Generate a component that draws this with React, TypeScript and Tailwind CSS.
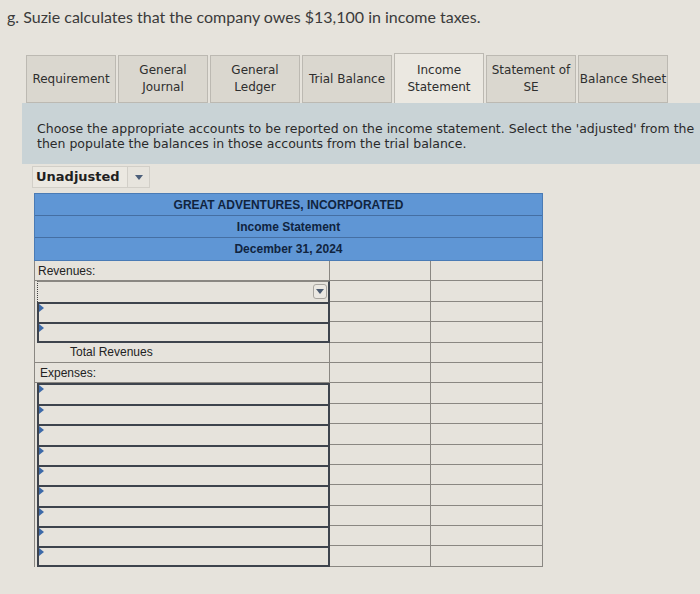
const tabs = [
  { label: ['Requirement'] },
  { label: ['General', 'Journal'] },
  { label: ['General', 'Ledger'] },
  { label: ['Trial Balance'] },
  { label: ['Income', 'Statement'], active: true },
  { label: ['Statement of', 'SE'] },
  { label: ['Balance Sheet'] },
]

function Flag() {
  return (
    <span className="absolute left-0 top-0 w-0 h-0 border-t-[4px] border-b-[4px] border-l-[5px] border-t-transparent border-b-transparent border-l-[#3d6aa8]" />
  )
}

function AmountCells() {
  return (
    <>
      <div className="w-[101px] border-r border-b border-[#8a8782]" />
      <div className="w-[112px] border-r border-b border-[#8a8782]" />
    </>
  )
}

function LabelRow({ text, indent }: { text: string; indent: string }) {
  return (
    <div className="flex h-[20.4px]">
      <div className={`w-[296px] border-l border-r border-b border-[#8a8782] flex items-center ${indent}`}>{text}</div>
      <AmountCells />
    </div>
  )
}

function InputRow({ last, select }: { last?: boolean; select?: boolean }) {
  return (
    <div className="flex h-[20.4px]">
      <div className="w-[296px] border-l border-[#8a8782] pl-[2px]">
        {select ? (
          <div className="relative h-full border-t border-t-[#8a8782] border-l border-l-[#444] [border-left-style:dotted] border-r-2 border-r-[#3e444d]">
            <span className="absolute right-[1px] top-[2px] w-[14px] h-[15px] border border-[#a9a6a0] bg-[#ebe8e2] rounded-[3px] flex items-center justify-center">
              <span className="w-0 h-0 border-l-[4px] border-r-[4px] border-t-[5px] border-l-transparent border-r-transparent border-t-[#4a5a70]" />
            </span>
          </div>
        ) : (
          <div className={`relative h-full border-l-2 border-t-2 border-r-2 border-[#3e444d] ${last ? 'border-b-2' : ''}`}>
            <Flag />
          </div>
        )}
      </div>
      <AmountCells />
    </div>
  )
}

export default function App() {
  return (
    <div className="w-[700px] h-[594px] overflow-hidden bg-[#e6e3dc] relative">
      <p className="pl-[7px] pt-[7px] text-[16px] leading-[20px] text-[#3b3b3b] font-['Lato',sans-serif] whitespace-nowrap">
        g. Suzie calculates that the company owes $13,100 in income taxes.
      </p>

      {/* Tabs */}
      <div className="ml-[26px] mt-[26px] flex items-end gap-[2px] font-['DejaVu_Sans',sans-serif] text-[12px] leading-[17px] text-[#2e2e2e]">
        {tabs.map((t, i) => (
          <div
            key={i}
            className={`w-[90px] flex flex-col items-center justify-center text-center border border-[#bcb9b2] ${
              t.active ? 'h-[50px] bg-[#ebe8e1] border-b-0' : 'h-[48px] bg-[#dad7cf]'
            }`}
          >
            {t.label.map((l) => (
              <span key={l}>{l}</span>
            ))}
          </div>
        ))}
      </div>

      {/* Instructions */}
      <div className="ml-[22px] bg-[#c9d3d6] pl-[15px] pt-[18px] pb-[13px] font-['DejaVu_Sans',sans-serif] text-[12.5px] leading-[15px] text-[#2a2a2a] whitespace-nowrap">
        <p>
          Choose the appropriate accounts to be reported on the income statement. Select the 'adjusted' from the
          <br />
          then populate the balances in those accounts from the trial balance.
        </p>
      </div>

      {/* Dropdown */}
      <div className="ml-[32px] mt-[2px] flex h-[22px] font-['DejaVu_Sans',sans-serif]">
        <div className="w-[96px] border border-[#d2cfc8] bg-[#ebe8e1] flex items-center pl-[3px] text-[13px] font-bold text-[#1f1f1f]">
          Unadjusted
        </div>
        <div className="w-[22px] border border-l-0 border-[#d2cfc8] bg-[#e7e4dd] flex items-center justify-center">
          <span className="w-0 h-0 border-l-[4px] border-r-[4px] border-t-[5px] border-l-transparent border-r-transparent border-t-[#4c5f7a]" />
        </div>
      </div>

      {/* Statement table */}
      <div className="ml-[34px] mt-[5px] w-[509px] font-['Liberation_Sans',Arial,sans-serif] text-[12px] text-[#222]">
        <div className="bg-[#5f96d5] border border-[#4a7bb5] font-bold text-[#10243f] text-center">
          <div className="h-[22px] flex items-center justify-center border-b border-[#456fa3]">GREAT ADVENTURES, INCORPORATED</div>
          <div className="h-[22px] flex items-center justify-center border-b border-[#456fa3]">Income Statement</div>
          <div className="h-[22px] flex items-center justify-center">December 31, 2024</div>
        </div>
        <LabelRow text="Revenues:" indent="pl-[3px]" />
        <InputRow select />
        <InputRow />
        <InputRow last />
        <LabelRow text="Total Revenues" indent="pl-[35px]" />
        <LabelRow text="Expenses:" indent="pl-[5px]" />
        {Array.from({ length: 9 }).map((_, i) => (
          <InputRow key={i} last={i === 8} />
        ))}
      </div>
    </div>
  )
}
